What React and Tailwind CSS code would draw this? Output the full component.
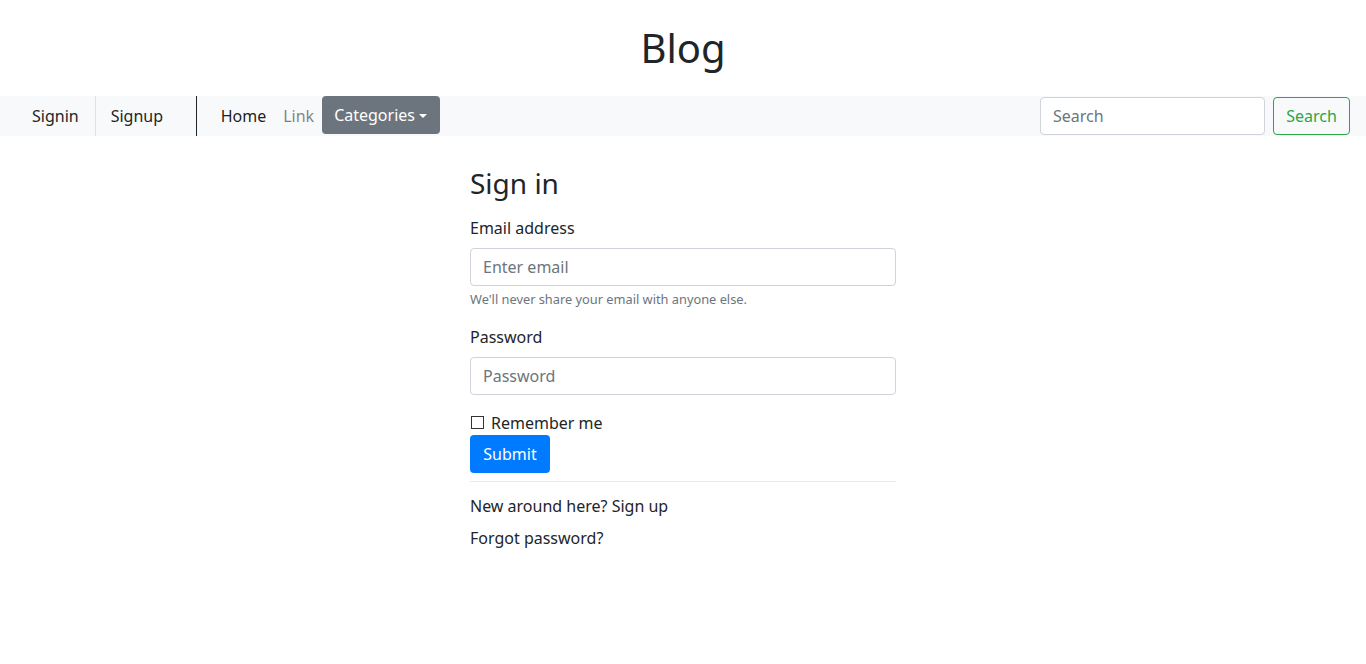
import React from "react";

export default function App() {
  return (
    <div className="min-h-[664px] bg-white text-[#212529]" style={{ fontFamily: '"Noto Sans", "Open Sans", sans-serif' }}>
      <header className="h-[96px] flex items-center justify-center">
        <h1 className="text-[40px] leading-[48px] font-normal">Blog</h1>
      </header>
      <nav className="h-[40px] bg-[#f8f9fa] flex items-start pl-[16px] pr-[16px] text-[16px] leading-[24px]">
        <a className="h-[40px] flex items-center px-[16px] border-r border-[#dee2e6] text-[#212529]">Signin</a>
        <a className="h-[40px] flex items-center w-[100px] pl-[15px] text-[#212529]">Signup</a>
        <div className="w-px h-[40px] bg-[#212529]"></div>
        <a className="h-[40px] flex items-center pl-[24px] pr-[8px] text-[rgba(0,0,0,0.9)]">Home</a>
        <a className="h-[40px] flex items-center pl-[9px] pr-[8px] text-[rgba(0,0,0,0.5)]">Link</a>
        <button className="h-[38px] w-[118px] flex items-center px-[12px] bg-[#6c757d] text-white rounded-[4px]">
          Categories
          <span className="ml-[4px] inline-block w-0 h-0 border-l-[4px] border-r-[4px] border-t-[4px] border-l-transparent border-r-transparent border-t-white mt-[2px]"></span>
        </button>
        <form className="ml-auto flex items-center gap-[8px] mt-[1px]">
          <input
            className="w-[225px] h-[38px] px-[12px] border border-[#ced4da] rounded-[4px] bg-white text-[16px] placeholder-[#6c757d] outline-none"
            placeholder="Search"
          />
          <button type="button" className="w-[77px] h-[38px] border border-[#28a745] rounded-[4px] text-[#28a745] text-[16px]">
            Search
          </button>
        </form>
      </nav>
      <main className="w-[426px] mx-auto pt-[31px] text-[16px] leading-[24px]">
        <h3 className="text-[28px] leading-[33.6px] font-normal mb-[15px]">Sign in</h3>
        <div className="mb-[16px]">
          <label className="block mb-[8px]">Email address</label>
          <input
            className="block w-full h-[38px] px-[12px] border border-[#ced4da] rounded-[4px] placeholder-[#6c757d] outline-none"
            placeholder="Enter email"
          />
          <small className="block mt-[4px] text-[12.8px] leading-[19.2px] text-[#6c757d]">We'll never share your email with anyone else.</small>
        </div>
        <div className="mb-[16px]">
          <label className="block mb-[8px]">Password</label>
          <input
            type="password"
            className="block w-full h-[38px] px-[12px] border border-[#ced4da] rounded-[4px] placeholder-[#6c757d] outline-none"
            placeholder="Password"
          />
        </div>
        <div className="flex items-center h-[24px]">
          <input type="checkbox" className="appearance-none w-[13px] h-[13px] border border-[#333] ml-[1px] mr-[7px] bg-white" />
          <label>Remember me</label>
        </div>
        <button className="h-[38px] w-[80px] bg-[#007bff] text-white rounded-[4px]">Submit</button>
        <div className="h-px bg-[#e9ecef] mt-[8px] mb-[12px]"></div>
        <a className="block">New around here? Sign up</a>
        <a className="block mt-[8px]">Forgot password?</a>
      </main>
    </div>
  );
}
